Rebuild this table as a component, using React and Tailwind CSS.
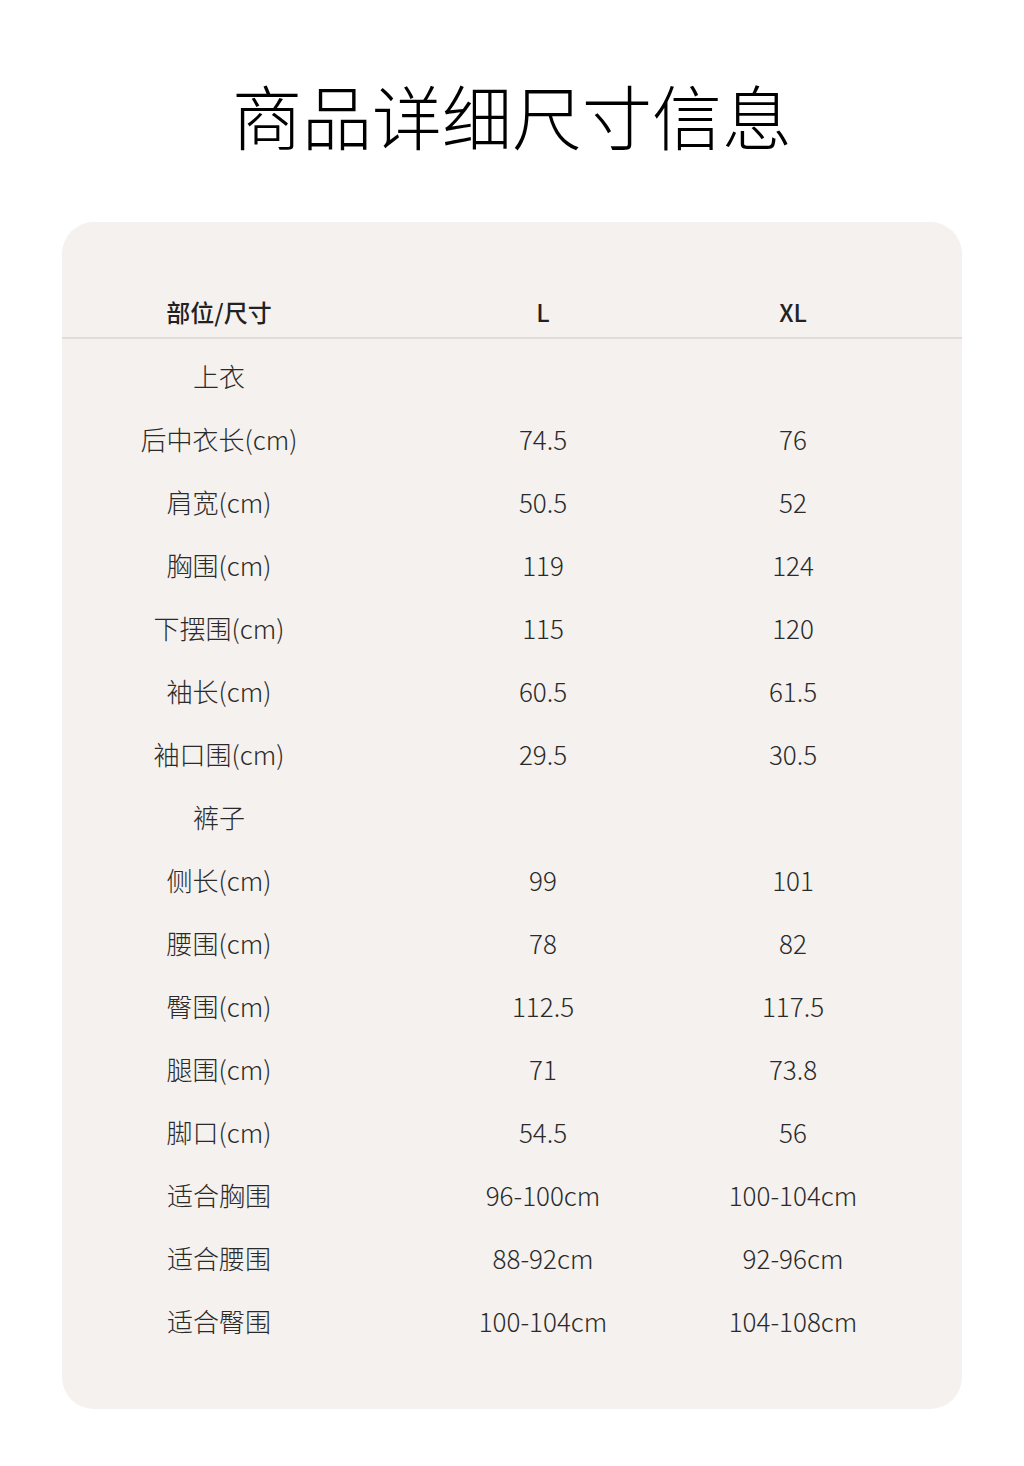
const rows = [
  { name: '上衣', l: '', xl: '' },
  { name: '后中衣长(cm)', l: '74.5', xl: '76' },
  { name: '肩宽(cm)', l: '50.5', xl: '52' },
  { name: '胸围(cm)', l: '119', xl: '124' },
  { name: '下摆围(cm)', l: '115', xl: '120' },
  { name: '袖长(cm)', l: '60.5', xl: '61.5' },
  { name: '袖口围(cm)', l: '29.5', xl: '30.5' },
  { name: '裤子', l: '', xl: '' },
  { name: '侧长(cm)', l: '99', xl: '101' },
  { name: '腰围(cm)', l: '78', xl: '82' },
  { name: '臀围(cm)', l: '112.5', xl: '117.5' },
  { name: '腿围(cm)', l: '71', xl: '73.8' },
  { name: '脚口(cm)', l: '54.5', xl: '56' },
  { name: '适合胸围', l: '96-100cm', xl: '100-104cm' },
  { name: '适合腰围', l: '88-92cm', xl: '92-96cm' },
  { name: '适合臀围', l: '100-104cm', xl: '104-108cm' },
];

const font = { fontFamily: '"Noto Sans CJK SC", "Noto Sans", sans-serif' };

export default function App() {
  return (
    <div className="w-[1024px] min-h-[1466px] bg-white" style={font}>
      {/* 标题 */}
      <div className="pt-[75px] h-[222px] flex justify-center">
        <h1 className="text-[70px] leading-[80px] font-light text-black">
          商品详细尺寸信息
        </h1>
      </div>

      {/* 尺码表 */}
      <div className="mx-[62px] bg-[#f4f1ee] rounded-[32px] pt-[70px] pb-[57px]">
        <div className="grid grid-cols-[314px_334px_166px] h-[40px] items-center text-[24px] font-medium text-[#222]">
          <div className="text-center">部位/尺寸</div>
          <div className="text-center">L</div>
          <div className="text-center">XL</div>
        </div>
        <div className="mt-[5px] h-[2px] bg-[#e2ddd8]" />
        <div className="mt-[5px]">
          {rows.map((r, i) => (
            <div
              key={i}
              className="grid grid-cols-[314px_334px_166px] h-[63px] items-center text-[26px] font-light text-[#2a2a2a]"
            >
              <div className="text-center">{r.name}</div>
              <div className="text-center">{r.l}</div>
              <div className="text-center">{r.xl}</div>
            </div>
          ))}
        </div>
      </div>
    </div>
  );
}
